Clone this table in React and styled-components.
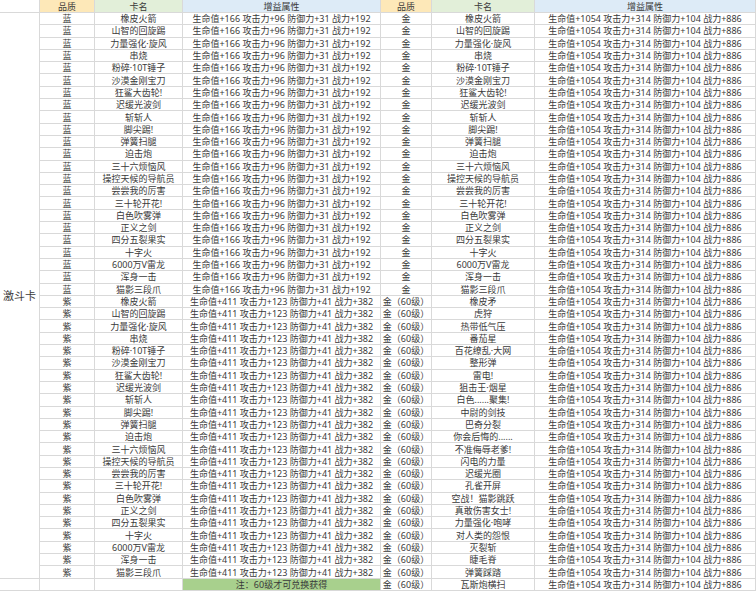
import React from "react";
import styled, { createGlobalStyle } from "styled-components";

const Global = createGlobalStyle`
  html, body { margin: 0; padding: 0; background: #ffffff; }
  body { font-family: "Noto Sans", "Noto Sans CJK SC", sans-serif; }
`;

const Sheet = styled.div`
  display: grid;
  width: 756px;
  grid-template-columns: 40px 55px 88px 198px 51px 103px 221px;
  grid-template-rows: 13px repeat(47, 12.3px);
  color: #3a3a3a;
  font-size: 9px;
  line-height: 1;
`;

const Cell = styled.div`
  box-sizing: border-box;
  display: flex;
  align-items: center;
  justify-content: center;
  white-space: nowrap;
  overflow: hidden;
  border-right: 1px solid #d9d9d9;
  border-bottom: 1px solid #d9d9d9;
  background: ${(p) => p.$bg || "transparent"};
`;

const HeaderCell = styled(Cell)`
  background: ${(p) => p.$bg};
`;

const SideLabel = styled(Cell)`
  grid-column: 1;
  grid-row: 2 / span 46;
  font-size: 11px;
  justify-content: flex-start;
  padding-left: 3px;
`;

const NoteCell = styled(Cell)`
  background: #a8d08d;
`;

const GOLD = "#fde8b8";
const GREEN = "#e2efd9";
const BLUE = "#ddebf7";

const baseNames = [
  "橡皮火箭", "山智的回旋踢", "力量强化·旋风", "串烧", "粉碎·10T锤子",
  "沙漠金刚宝刀", "狂鲨大齿轮!", "迟缓光波剑", "斩斩人", "脚尖踢!",
  "弹簧扫腿", "迫击炮", "三十六烦恼风", "操控天候的导航员", "尝尝我的厉害",
  "三十轮开花!", "白色吹雾弹", "正义之剑", "四分五裂果实", "十字火",
  "6000万V雷龙", "浑身一击", "猫影三段爪",
];

const lv60Names = [
  "橡皮矛", "虎狩", "热带低气压", "番茄星", "百花缭乱·大网", "整形弹",
  "雷电!", "狙击王·烟星", "白色......聚集!", "中尉的剑技", "巴奇分裂",
  "你会后悔的......", "不准侮辱老爹!", "闪电的力量", "迟缓光圈", "孔雀开屏",
  "空战！猫影跳跃", "真敢伤害女士!", "力量强化·咆哮", "对人类的怨恨",
  "灭裂斩", "睫毛脊", "弹簧踩踏", "瓦斯炮横扫",
];

const BLUE_STAT = "生命值+166 攻击力+96 防御力+31 战力+192";
const PURPLE_STAT = "生命值+411 攻击力+123 防御力+41 战力+382";
const GOLD_STAT = "生命值+1054 攻击力+314 防御力+104 战力+886";

const left = [
  ...baseNames.map((n) => ["蓝", n, BLUE_STAT]),
  ...baseNames.map((n) => ["紫", n, PURPLE_STAT]),
];

const right = [
  ...baseNames.map((n) => ["金", n, GOLD_STAT]),
  ...lv60Names.map((n) => ["金（60级）", n, GOLD_STAT]),
];

export default function App() {
  const rows = [];
  for (let i = 0; i < 47; i++) {
    const l = left[i];
    const r = right[i];
    if (l) {
      rows.push(
        <Cell key={`l0-${i}`} style={{ gridColumn: 2 }}>{l[0]}</Cell>,
        <Cell key={`l1-${i}`}>{l[1]}</Cell>,
        <Cell key={`l2-${i}`}>{l[2]}</Cell>
      );
    } else {
      rows.push(
        <Cell key="n0" style={{ gridColumn: 1 }} />,
        <Cell key="n1" />,
        <Cell key="n2" />,
        <NoteCell key="n3">注：60级才可兑换获得</NoteCell>
      );
    }
    rows.push(
      <Cell key={`r0-${i}`}>{r[0]}</Cell>,
      <Cell key={`r1-${i}`}>{r[1]}</Cell>,
      <Cell key={`r2-${i}`}>{r[2]}</Cell>
    );
  }

  return (
    <>
      <Global />
      <Sheet>
        <Cell />
        <HeaderCell $bg={GOLD}>品质</HeaderCell>
        <HeaderCell $bg={GREEN}>卡名</HeaderCell>
        <HeaderCell $bg={BLUE}>增益属性</HeaderCell>
        <HeaderCell $bg={GOLD}>品质</HeaderCell>
        <HeaderCell $bg={GREEN}>卡名</HeaderCell>
        <HeaderCell $bg={BLUE}>增益属性</HeaderCell>
        <SideLabel>激斗卡</SideLabel>
        {rows}
      </Sheet>
    </>
  );
}
